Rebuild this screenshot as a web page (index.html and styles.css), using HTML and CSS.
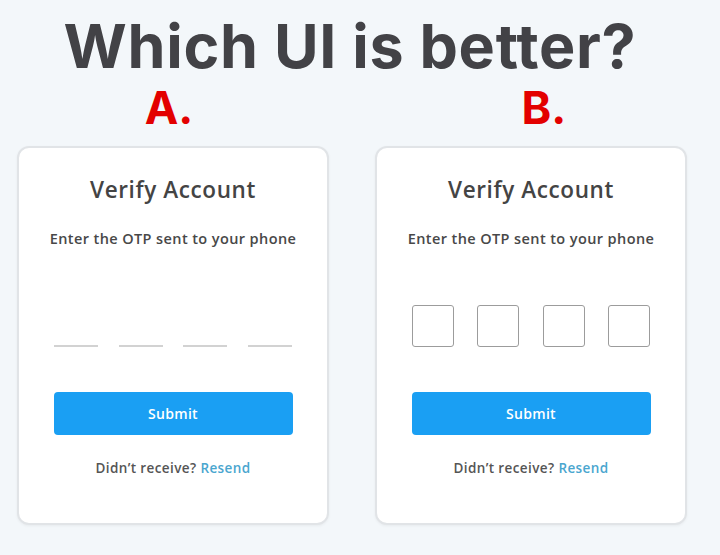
FILE: index.html
```html
<!DOCTYPE html>
<html lang="en">
<head>
    <meta charset="UTF-8">
    <meta name="viewport" content="width=device-width, initial-scale=1.0">
    <title>Which UI is better?</title>
    <link rel="stylesheet" href="styles.css">
</head>
<body>
    <h1>Which UI is better?</h1>
    <div class="labels">
        <div class="label label-a">A.</div>
        <div class="label label-b">B.</div>
    </div>

    <div class="cards">
        <div class="card">
            <h2>Verify Account</h2>
            <p class="hint">Enter the OTP sent to your phone</p>
            <div class="otp otp-lines">
                <span></span><span></span><span></span><span></span>
            </div>
            <button class="submit">Submit</button>
            <p class="resend">Didn&rsquo;t receive? <a href="#">Resend</a></p>
        </div>

        <div class="card">
            <h2>Verify Account</h2>
            <p class="hint">Enter the OTP sent to your phone</p>
            <div class="otp otp-boxes">
                <span></span><span></span><span></span><span></span>
            </div>
            <button class="submit">Submit</button>
            <p class="resend">Didn&rsquo;t receive? <a href="#">Resend</a></p>
        </div>
    </div>
</body>
</html>
```

FILE: styles.css
```css
body {
    background-color: #f3f7fa;
    font-family: "Open Sans", Arial, sans-serif;
    margin: 0;
    padding: 0;
    width: 720px;
    height: 555px;
    overflow: hidden;
}
h1 {
    font-family: Inter, "Liberation Sans", sans-serif;
    font-weight: 700;
    font-size: 61px;
    line-height: 1;
    color: #424246;
    text-align: center;
    margin: 0;
    padding: 16px 20px 0 0;
    letter-spacing: 0.7px;
}
.labels {
    display: grid;
    grid-template-columns: 312px 312px;
    column-gap: 46px;
    padding-left: 17px;
    margin-top: 6px;
}
.label {
    font-family: Inter, "Liberation Sans", sans-serif;
    font-weight: 700;
    font-size: 45px;
    line-height: 50px;
    color: #e30000;
    text-align: center;
}
.label-a {
    margin-right: 8px;
}
.label-b {
    margin-left: 26px;
}
.cards {
    display: flex;
    gap: 46px;
    padding-left: 17px;
    margin-top: 13px;
}
.card {
    width: 312px;
    height: 379px;
    box-sizing: border-box;
    background-color: white;
    border: 2px solid #e1e4e7;
    border-radius: 12px;
    box-shadow: 0 1px 3px rgba(0, 0, 0, 0.05);
    display: flex;
    flex-direction: column;
    align-items: center;
    padding: 27px 37px 0;
}
h2 {
    font-size: 22.5px;
    font-weight: 600;
    color: #444;
    margin: 0;
    line-height: 30px;
    letter-spacing: 0.6px;
}
.hint {
    font-size: 14.5px;
    font-weight: 600;
    color: #484848;
    margin: 24px 0 0;
    line-height: 20px;
    letter-spacing: 0.4px;
    white-space: nowrap;
}
.otp {
    width: 238px;
    display: flex;
    justify-content: space-between;
    height: 42px;
    margin-top: 56px;
}
.otp-lines span {
    width: 44px;
    height: 42px;
    border-bottom: 2px solid #d2d2d2;
    box-sizing: border-box;
}
.otp-boxes span {
    width: 42px;
    height: 42px;
    border: 1.5px solid #9c9c9c;
    border-radius: 3px;
    box-sizing: border-box;
}
.submit {
    width: 239px;
    height: 43px;
    margin-top: 45px;
    border: none;
    border-radius: 4px;
    background-color: #1a9ff3;
    color: white;
    font-family: inherit;
    font-size: 14px;
    font-weight: 600;
    letter-spacing: 0.3px;
}
.resend {
    font-size: 13.5px;
    font-weight: 600;
    color: #555;
    margin: 24px 0 0;
    letter-spacing: 0.4px;
}
.resend a {
    color: #4aa6cf;
    text-decoration: none;
}
```
